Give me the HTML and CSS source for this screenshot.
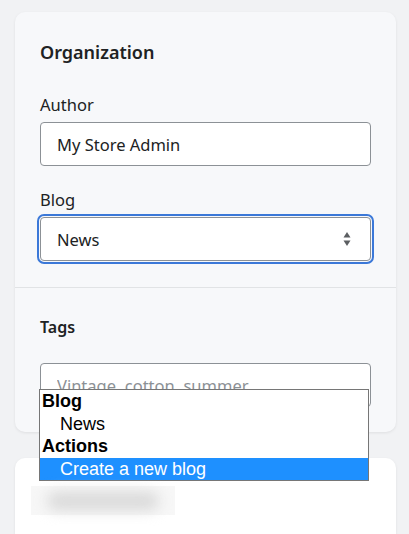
FILE: index.html
```html
<!DOCTYPE html>
<html>

<head>
    <meta charset="UTF-8">
    <meta name="viewport" content="width=device-width, initial-scale=1.0">
    <title>Blog post organization</title>
    <link rel="stylesheet" href="styles.css">
</head>

<body>
    <div class="card">
        <div class="section">
            <h2 class="card-title">Organization</h2>
            <div class="field">
                <label for="author">Author</label>
                <input type="text" id="author" class="text-input" value="My Store Admin">
            </div>
            <div class="field">
                <label for="blog">Blog</label>
                <div class="select focused">
                    <span class="select-value">News</span>
                    <svg class="select-arrows" width="8" height="16" viewBox="0 0 8 16">
                        <path d="M4 1 L7.5 6.5 H0.5 Z" fill="#5c5f62"/>
                        <path d="M4 15 L7.5 9.5 H0.5 Z" fill="#5c5f62"/>
                    </svg>
                </div>
            </div>
        </div>
        <div class="section section-tags">
            <h3 class="section-title">Tags</h3>
            <div class="tags-wrap">
                <input type="text" id="tags" class="text-input" placeholder="Vintage, cotton, summer">
                <!-- open list of the Blog select -->
                <ul class="dropdown">
                    <li class="group">Blog</li>
                    <li class="option">News</li>
                    <li class="group">Actions</li>
                    <li class="option selected">Create a new blog</li>
                </ul>
            </div>
        </div>
    </div>

    <div class="card card-white">
        <div class="skeleton">
            <div class="skeleton-bar"></div>
        </div>
    </div>
</body>

</html>
```

FILE: styles.css
```css
body {
    margin: 0;
    padding: 12px 13px 0 15px;
    background-color: #f1f2f4;
    font-family: "Noto Sans", "Open Sans", sans-serif;
    color: #202223;
}

.card {
    background-color: #f7f8fa;
    border-radius: 10px;
    box-shadow: 0 1px 3px rgba(0, 0, 0, 0.08);
}

.card-white {
    background-color: #ffffff;
    margin-top: 26px;
    height: 76px;
    border-radius: 10px 10px 0 0;
    padding: 28px 16px 0;
    box-sizing: border-box;
}

.section {
    padding: 27px 25px 26px;
}

.section-tags {
    border-top: 1px solid #e1e3e5;
    padding-top: 28px;
    padding-bottom: 25px;
}

.card-title {
    margin: 0 0 28px;
    font-size: 18px;
    line-height: 26px;
    font-weight: 600;
}

.section-title {
    margin: 0 0 25px;
    font-size: 16px;
    line-height: 22px;
    font-weight: 600;
}

.field {
    margin-bottom: 22px;
}

.field:last-child {
    margin-bottom: 0;
}

.field label {
    display: block;
    font-size: 16.5px;
    line-height: 24px;
    margin-bottom: 5px;
    color: #202223;
}

.text-input {
    display: block;
    width: 100%;
    height: 44px;
    box-sizing: border-box;
    padding: 0 16px;
    border: 1px solid #8c9196;
    border-radius: 4px;
    background-color: #ffffff;
    font-family: inherit;
    font-size: 16.5px;
    color: #202223;
}

.text-input::placeholder {
    color: #8c9196;
}

.select {
    display: flex;
    align-items: center;
    justify-content: space-between;
    height: 44px;
    box-sizing: border-box;
    padding: 0 19px 0 16px;
    border: 1px solid #8c9196;
    border-radius: 4px;
    background-color: #ffffff;
    font-size: 16.5px;
}

.select.focused {
    outline: 2px solid #3b78d8;
    outline-offset: 1px;
}

.select-arrows {
    display: block;
}

.tags-wrap {
    position: relative;
}

.dropdown {
    position: absolute;
    left: -1px;
    top: 26px;
    width: 328px;
    margin: 0;
    padding: 0;
    list-style: none;
    background-color: #ffffff;
    border: 1px solid #767676;
    font-family: "Liberation Sans", Arial, sans-serif;
    font-size: 18px;
    line-height: 22.5px;
    color: #000000;
}

.dropdown .group {
    font-weight: bold;
    padding-left: 2px;
}

.dropdown .option {
    padding-left: 20px;
}

.dropdown .option.selected {
    background-color: #1e90ff;
    color: #ffffff;
}

.skeleton {
    width: 144px;
    height: 29px;
    background-color: #f7f7f7;
    display: flex;
    align-items: center;
    justify-content: center;
}

.skeleton-bar {
    width: 112px;
    height: 18px;
    border-radius: 9px;
    background-color: #d9d9d9;
    filter: blur(7px);
}
```
